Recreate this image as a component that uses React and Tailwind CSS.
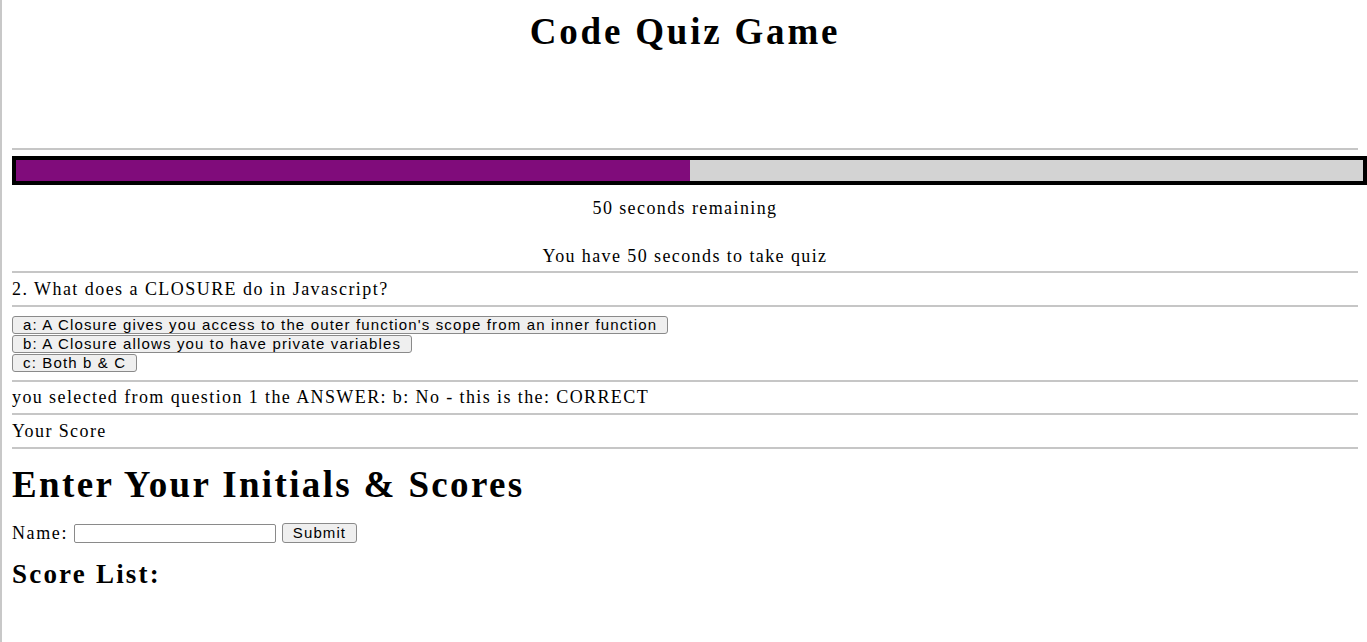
import { useState } from "react";

const answers = [
  "a: A Closure gives you access to the outer function's scope from an inner function",
  "b: A Closure allows you to have private variables",
  "c: Both b & C",
];

function Rule({ className = "" }) {
  return <div className={`h-[2px] bg-[#c6c6c6] ${className}`} />;
}

export default function App() {
  const [name, setName] = useState("");
  const secondsLeft = 50;

  return (
    <div className="min-h-screen bg-white border-l-2 border-[#c8c8c8] pl-[10px] pr-[9px] font-['Liberation_Serif',serif] text-black overflow-hidden">
      {/* Titre */}
      <h1 className="pt-[12px] text-center text-[37px] leading-[40px] font-bold tracking-[2.8px]">Code Quiz Game</h1>

      <Rule className="mt-[96px]" />

      {/* Barre du temps */}
      <div className="mt-[6px] -mr-[9px] h-[29px] border-[4px] border-black bg-[#d3d3d3]">
        <div className="h-full w-1/2 bg-[#800c7b]" />
      </div>

      <p className="mt-[13px] text-center text-[18px] leading-[20px] tracking-[1.4px]">{secondsLeft} seconds remaining</p>
      <p className="mt-[28px] text-center text-[18px] leading-[20px] tracking-[1.4px]">You have 50 seconds to take quiz</p>

      <Rule className="mt-[5px]" />
      <p className="mt-[6px] text-[18px] leading-[20px] tracking-[1.45px]">2. What does a CLOSURE do in Javascript?</p>
      <Rule className="mt-[6px]" />

      {/* Réponses */}
      <div className="mt-[9px] flex flex-col items-start gap-[1px]">
        {answers.map((a) => (
          <button
            key={a}
            className="h-[18px] px-[10px] border border-[#8a8a8a] rounded-[3px] bg-[#efefef] font-['Liberation_Sans',sans-serif] text-[15px] leading-[16px] tracking-[1.15px] text-black"
          >
            {a}
          </button>
        ))}
      </div>

      <Rule className="mt-[8px]" />
      <p className="mt-[5px] text-[18px] leading-[20px] tracking-[1.4px]">you selected from question 1 the ANSWER: b: No - this is the: CORRECT</p>
      <Rule className="mt-[6px]" />
      <p className="mt-[6px] text-[18px] leading-[20px] tracking-[1.4px]">Your Score</p>
      <Rule className="mt-[6px]" />

      {/* Scores */}
      <h1 className="mt-[16px] text-[37px] leading-[40px] font-bold tracking-[2.35px]">Enter Your Initials &amp; Scores</h1>

      <form className="mt-[18px] h-[20px] flex items-center" onSubmit={(e) => e.preventDefault()}>
        <label className="text-[18px] leading-[20px] tracking-[1.6px]">Name:</label>
        <input
          type="text"
          value={name}
          onChange={(e) => setName(e.target.value)}
          className="ml-[6px] w-[202px] h-[19px] border border-[#8a8a8a] rounded-[2px] bg-white"
        />
        <button
          type="submit"
          className="ml-[6px] h-[20px] w-[75px] border border-[#8a8a8a] rounded-[3px] bg-[#efefef] font-['Liberation_Sans',sans-serif] text-[15px] leading-[16px] tracking-[1.1px]"
        >
          Submit
        </button>
      </form>

      <h2 className="mt-[16px] text-[27px] leading-[30px] font-bold tracking-[2.2px]">Score List:</h2>
    </div>
  );
}
